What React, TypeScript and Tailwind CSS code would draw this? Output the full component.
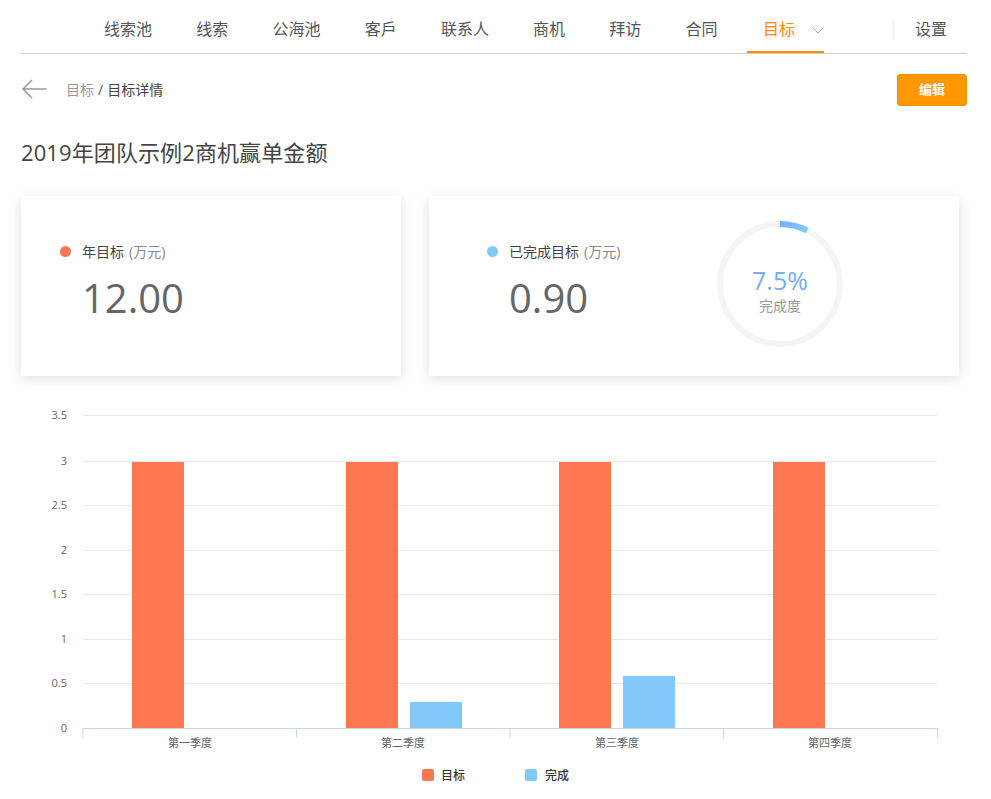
const FONT = '[font-family:"Open_Sans","Noto_Sans_CJK_SC",sans-serif]';
const SVG_FONT = '"Open Sans","Noto Sans CJK SC",sans-serif';

const navItems = ["线索池", "线索", "公海池", "客戶", "联系人", "商机", "拜访", "合同"];

const gridLines: [string, number][] = [
  ["3.5", 415.5],
  ["3", 461.5],
  ["2.5", 505.5],
  ["2", 550.5],
  ["1.5", 594.5],
  ["1", 639.5],
  ["0.5", 683.5],
  ["0", 728.5],
];

const orangeBars = [132, 346, 559, 773];
const blueBars: [number, number][] = [
  [410, 702],
  [623, 676],
];
const ticks = [83, 296.5, 510, 723.5, 937.5];
const quarters: [string, number][] = [
  ["第一季度", 190],
  ["第二季度", 403],
  ["第三季度", 617],
  ["第四季度", 830],
];

function Chart() {
  return (
    <svg width="946" height="394" viewBox="21 405 946 394" className="block mt-[29px]" fontFamily={SVG_FONT}>
      {gridLines.map(([label, y]) => (
        <g key={label}>
          {label !== "0" && <line x1="83" x2="937" y1={y} y2={y} stroke="#e6e8eb" strokeWidth="1" />}
          <text x="67" y={y + 3.5} textAnchor="end" fontSize="11" fill="#666">
            {label}
          </text>
        </g>
      ))}
      {orangeBars.map((x) => (
        <rect key={x} x={x} y="462" width="52" height="266" fill="#ff7750" />
      ))}
      {blueBars.map(([x, y]) => (
        <rect key={x} x={x} y={y} width="52" height={728 - y} fill="#82c8fb" />
      ))}
      <line x1="83" x2="938" y1="728.5" y2="728.5" stroke="#c5d5ea" strokeWidth="1" />
      {ticks.map((x) => (
        <line key={x} x1={x} x2={x} y1="728" y2="738" stroke="#c5d5ea" strokeWidth="1" />
      ))}
      {quarters.map(([label, x]) => (
        <text key={label} x={x} y="747" textAnchor="middle" fontSize="11" fill="#666">
          {label}
        </text>
      ))}
      <rect x="422" y="769" width="12" height="12" rx="2" fill="#ff7750" />
      <text x="441" y="780" fontSize="12" fontWeight="500" fill="#333">目标</text>
      <rect x="525" y="769" width="12" height="12" rx="2" fill="#82c8fb" />
      <text x="545" y="780" fontSize="12" fontWeight="500" fill="#333">完成</text>
    </svg>
  );
}

function Ring() {
  const r = 60;
  const c = 2 * Math.PI * r;
  return (
    <div className="relative w-[126px] h-[126px] mt-[25px]">
      <svg width="126" height="126" viewBox="0 0 126 126" className="block">
        <defs>
          <linearGradient id="ringGrad" x1="0" y1="0" x2="1" y2="0">
            <stop offset="0" stopColor="#74b0fb" />
            <stop offset="1" stopColor="#82ccff" />
          </linearGradient>
        </defs>
        <circle cx="63" cy="63" r={r} fill="none" stroke="#f4f4f4" strokeWidth="6" />
        <path
          d={`M63 3 A60 60 0 0 1 ${63 + r * Math.sin(0.075 * 2 * Math.PI)} ${63 - r * Math.cos(0.075 * 2 * Math.PI)}`}
          fill="none"
          stroke="url(#ringGrad)"
          strokeWidth="6"
          strokeDasharray={`${c}`}
        />
      </svg>
      <div className="absolute inset-0 flex flex-col items-center pt-[44px]">
        <span className="text-[25px] leading-[30px] text-[#74aef8]">7.5%</span>
        <span className="text-[14px] leading-[18px] mt-[2px] text-[#999]">完成度</span>
      </div>
    </div>
  );
}

function Stat({ dot, label, value }: { dot: string; label: string; value: string }) {
  return (
    <div>
      <div className="flex items-center h-[20px]">
        <span className={`w-[11px] h-[11px] rounded-full mr-[11px] ${dot}`} />
        <span className="text-[14px] text-[#444]">{label}</span>
        <span className="text-[14px] text-[#888] ml-[5px]">(万元)</span>
      </div>
      <div className="text-[40px] leading-[56px] text-[#666] mt-[9px] ml-[22px]">{value}</div>
    </div>
  );
}

export default function App() {
  return (
    <div className={`w-[991px] h-[799px] overflow-hidden bg-white pl-[21px] pr-[24px] ${FONT}`}>
      <nav className="flex h-[54px] border-b border-[#cfcfcf] pl-[61px]">
        {navItems.map((item) => (
          <a key={item} className="flex items-center h-[53px] pt-[5px] px-[22.1px] text-[16px] text-[#555]">
            {item}
          </a>
        ))}
        <a className="flex items-center h-[53px] pt-[7px] ml-[7.4px] pl-[16px] border-b-2 border-[#ff8a00] text-[16px] text-[#ff8a00] w-[77px]">
          目标
          <svg width="12" height="7" viewBox="0 0 12 7" className="ml-[17px] mt-[2px]">
            <path d="M0.5 0.5 L6 6 L11.5 0.5" fill="none" stroke="#aaa" strokeWidth="1" />
          </svg>
        </a>
        <div className="ml-auto flex items-center h-[53px] pt-[7px]">
          <span className="w-px h-[20px] bg-[#eee]" />
        </div>
        <a className="flex items-center h-[53px] pt-[5px] pl-[21px] pr-[20px] text-[16px] text-[#555]">设置</a>
      </nav>

      <div className="flex items-center justify-between pt-[20px]">
        <div className="flex items-center h-[32px] pb-[2px]">
          <svg width="25" height="20" viewBox="0 0 25 20" className="ml-px mr-[19px]">
            <path d="M24.5 10 H1 M10 1 L1 10 L10 19" fill="none" stroke="#999" strokeWidth="1.5" />
          </svg>
          <span className="text-[14px] text-[#999]">目标</span>
          <span className="text-[14px] text-[#555] mx-[4px]">/</span>
          <span className="text-[14px] text-[#444]">目标详情</span>
        </div>
        <button className="w-[70px] h-[32px] rounded-[3px] bg-[#ff9800] border border-[#f38f00] text-[13px] font-bold text-white">
          编辑
        </button>
      </div>

      <h1 className="mt-[31px] text-[22px] leading-[30px] tracking-[0.1px] font-normal text-[#444]">2019年团队示例2商机赢单金额</h1>

      <div className="flex mt-[29px]">
        <section className="w-[380px] h-[180px] bg-white shadow-[0_3px_12px_rgba(0,0,0,0.13)] pl-[39px] pt-[45px]">
          <Stat dot="bg-[#ff7750]" label="年目标" value="12.00" />
        </section>
        <section className="w-[530px] h-[180px] ml-[28px] bg-white shadow-[0_3px_12px_rgba(0,0,0,0.13)] flex">
          <div className="w-[288px] pl-[58px] pt-[45px]">
            <Stat dot="bg-[#82c8fb]" label="已完成目标" value="0.90" />
          </div>
          <Ring />
        </section>
      </div>

      <Chart />
    </div>
  );
}
